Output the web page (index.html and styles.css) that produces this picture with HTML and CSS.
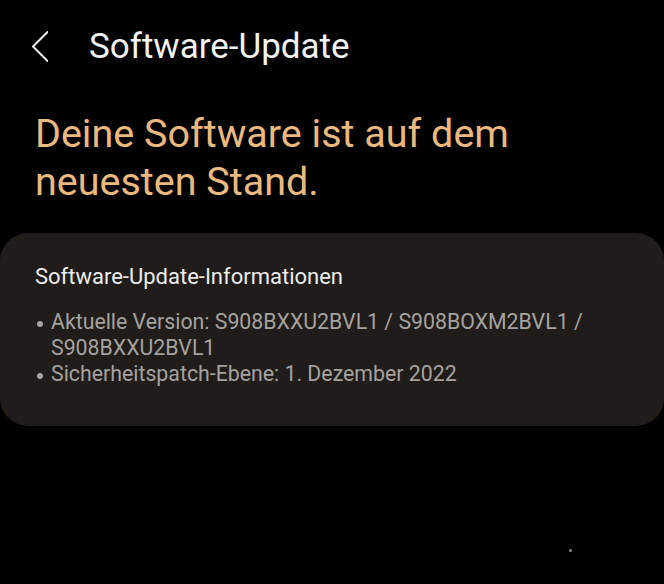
FILE: index.html
```html
<!DOCTYPE html>
<html lang="de">
<head>
<meta charset="utf-8">
<title>Software-Update</title>
<link rel="stylesheet" href="styles.css">
</head>
<body>
<div class="screen">
  <header class="appbar">
    <svg class="back" width="16" height="32" viewBox="0 0 16 32" aria-hidden="true">
      <polyline points="15.5,1 1,15.5 15.5,30" fill="none" stroke="#ececec" stroke-width="2" stroke-linecap="round" stroke-linejoin="round"/>
    </svg>
    <h1 class="title">Software-Update</h1>
  </header>
  <p class="status">Deine Software ist auf dem neuesten Stand.</p>
  <section class="card">
    <h2 class="card-title">Software-Update-Informationen</h2>
    <ul class="info">
      <li><span class="dot"></span><span>Aktuelle Version: S908BXXU2BVL1 / S908BOXM2BVL1 / S908BXXU2BVL1</span></li>
      <li><span class="dot"></span><span>Sicherheitspatch-Ebene: 1. Dezember 2022</span></li>
    </ul>
  </section>
  <span class="speck"></span>
</div>
</body>
</html>
```
FILE: styles.css
```css
html,body{margin:0;padding:0;background:#000;}
body{font-family:Roboto,"Noto Sans",sans-serif;}
.screen{position:relative;width:664px;height:584px;overflow:hidden;background:#000;}
.appbar{display:flex;align-items:center;padding:25px 0 0 32px;height:44px;}
.back{display:block;margin-right:41px;flex:none;}
.title{margin:0;font-size:35px;font-weight:400;color:#f2f2f2;line-height:44px;}
.status{margin:41px 0 0 35px;font-size:39.5px;line-height:48px;color:#ebb97e;font-weight:400;width:580px;}
.card{margin-top:27px;background:#201c19;border-radius:28px;padding:31px 35px 39px 35px;}
.card-title{margin:0;font-size:22px;font-weight:400;line-height:26px;color:#ececec;}
.info{list-style:none;margin:19px 0 0 0;padding:0;font-size:21.3px;line-height:26px;color:#a5a29f;}
.info li{display:flex;}
.dot{flex:none;width:16px;position:relative;}
.dot::before{content:"";position:absolute;left:2px;top:12px;width:6px;height:6px;border-radius:50%;background:#a5a29f;}
.speck{position:absolute;left:569px;top:549px;width:3px;height:3px;border-radius:50%;background:#8a8a8a;}
```
